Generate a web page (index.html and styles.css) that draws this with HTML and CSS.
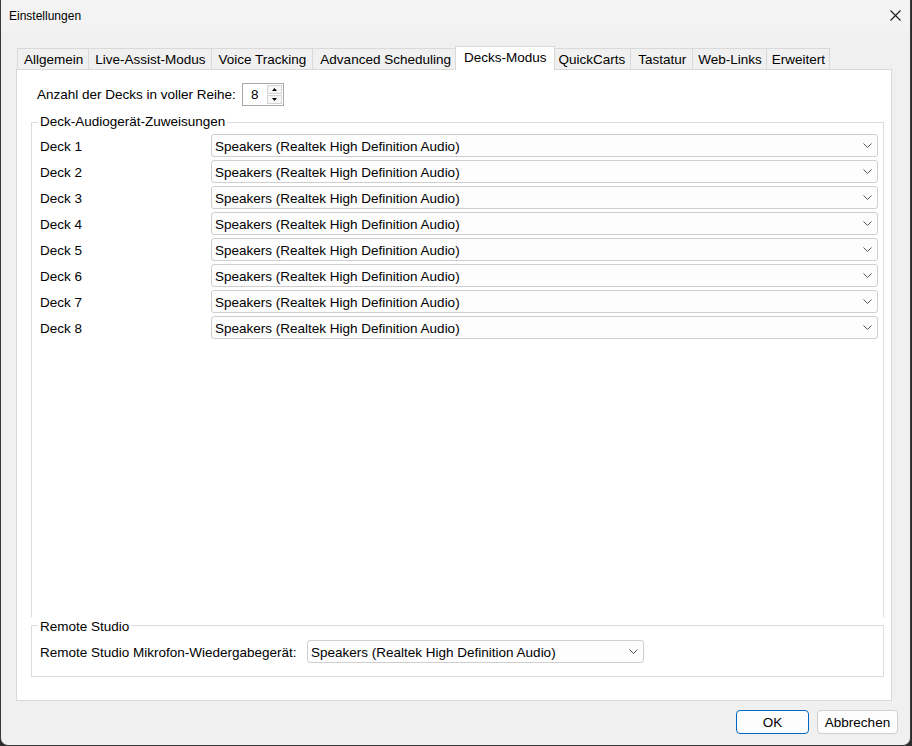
FILE: index.html
```html
<!doctype html>
<html>
<head>
<meta charset="UTF-8">
<title>Einstellungen</title>
	<link rel="stylesheet" href="styles.css">
</head>

<body>
	<div class="window">
		<div class="titlebar">
			<span class="title">Einstellungen</span>
			<svg class="close" width="11" height="11" viewBox="0 0 11 11"><path d="M0.5 0.5 L10.5 10.5 M10.5 0.5 L0.5 10.5" stroke="#1a1a1a" stroke-width="1.1" fill="none"/></svg>
		</div>

		<div class="content">
			<div class="tabs">
				<div class="tab">Allgemein</div>
				<div class="tab">Live-Assist-Modus</div>
				<div class="tab wide">Voice Tracking</div>
				<div class="tab wide">Advanced Scheduling</div>
				<div class="tab active">Decks-Modus</div>
				<div class="tab">QuickCarts</div>
				<div class="tab wide">Tastatur</div>
				<div class="tab narrow">Web-Links</div>
				<div class="tab narrow">Erweitert</div>
			</div>

			<div class="panel">
				<div class="count-row">
					<label class="count-label">Anzahl der Decks in voller Reihe:</label>
					<div class="spin">
						<span class="spin-value">8</span>
						<div class="spin-btns">
							<span class="spin-btn"><svg width="5" height="3" viewBox="0 0 5 3"><path d="M2.5 0 L5 3 L0 3 Z" fill="#000"/></svg></span>
							<span class="spin-btn"><svg width="5" height="3" viewBox="0 0 5 3"><path d="M0 0 L5 0 L2.5 3 Z" fill="#000"/></svg></span>
						</div>
					</div>
				</div>

				<fieldset class="group decks">
					<legend>Deck-Audiogerät-Zuweisungen</legend>
					<div class="deck-row"><span class="deck-label">Deck 1</span><div class="combo"><span>Speakers (Realtek High Definition Audio)</span><svg class="chev" width="9" height="5" viewBox="0 0 9 5"><path d="M0.5 0.5 L4.5 4.5 L8.5 0.5" stroke="#555" fill="none"/></svg></div></div>
					<div class="deck-row"><span class="deck-label">Deck 2</span><div class="combo"><span>Speakers (Realtek High Definition Audio)</span><svg class="chev" width="9" height="5" viewBox="0 0 9 5"><path d="M0.5 0.5 L4.5 4.5 L8.5 0.5" stroke="#555" fill="none"/></svg></div></div>
					<div class="deck-row"><span class="deck-label">Deck 3</span><div class="combo"><span>Speakers (Realtek High Definition Audio)</span><svg class="chev" width="9" height="5" viewBox="0 0 9 5"><path d="M0.5 0.5 L4.5 4.5 L8.5 0.5" stroke="#555" fill="none"/></svg></div></div>
					<div class="deck-row"><span class="deck-label">Deck 4</span><div class="combo"><span>Speakers (Realtek High Definition Audio)</span><svg class="chev" width="9" height="5" viewBox="0 0 9 5"><path d="M0.5 0.5 L4.5 4.5 L8.5 0.5" stroke="#555" fill="none"/></svg></div></div>
					<div class="deck-row"><span class="deck-label">Deck 5</span><div class="combo"><span>Speakers (Realtek High Definition Audio)</span><svg class="chev" width="9" height="5" viewBox="0 0 9 5"><path d="M0.5 0.5 L4.5 4.5 L8.5 0.5" stroke="#555" fill="none"/></svg></div></div>
					<div class="deck-row"><span class="deck-label">Deck 6</span><div class="combo"><span>Speakers (Realtek High Definition Audio)</span><svg class="chev" width="9" height="5" viewBox="0 0 9 5"><path d="M0.5 0.5 L4.5 4.5 L8.5 0.5" stroke="#555" fill="none"/></svg></div></div>
					<div class="deck-row"><span class="deck-label">Deck 7</span><div class="combo"><span>Speakers (Realtek High Definition Audio)</span><svg class="chev" width="9" height="5" viewBox="0 0 9 5"><path d="M0.5 0.5 L4.5 4.5 L8.5 0.5" stroke="#555" fill="none"/></svg></div></div>
					<div class="deck-row"><span class="deck-label">Deck 8</span><div class="combo"><span>Speakers (Realtek High Definition Audio)</span><svg class="chev" width="9" height="5" viewBox="0 0 9 5"><path d="M0.5 0.5 L4.5 4.5 L8.5 0.5" stroke="#555" fill="none"/></svg></div></div>
				</fieldset>

				<fieldset class="group remote">
					<legend>Remote Studio</legend>
					<div class="remote-row">
						<span class="remote-label">Remote Studio Mikrofon-Wiedergabegerät:</span>
						<div class="combo remote-combo"><span>Speakers (Realtek High Definition Audio)</span><svg class="chev" width="9" height="5" viewBox="0 0 9 5"><path d="M0.5 0.5 L4.5 4.5 L8.5 0.5" stroke="#555" fill="none"/></svg></div>
					</div>
				</fieldset>
			</div>

			<div class="buttons">
				<button class="btn default">OK</button>
				<button class="btn">Abbrechen</button>
			</div>
		</div>
	</div>
</body>
</html>
```

FILE: styles.css
```css
body {
	margin: 0;
	background-color: #2b2b2b;
	font-family: "Liberation Sans", Arial, sans-serif;
	font-size: 13.5px;
	color: #000000;
}

.window {
	width: 911px;
	height: 746px;
	box-sizing: border-box;
	background-color: #f0f0f0;
	border: 1px solid #3a3a3a;
	border-top: none;
	border-radius: 0 0 8px 8px;
	overflow: hidden;
}

.titlebar {
	height: 31px;
	display: flex;
	align-items: center;
	justify-content: space-between;
	padding: 0 9px 0 8px;
	background-color: #f3f3f3;
}

.title {
	font-size: 12px;
}

.close {
	display: block;
	margin-top: -1px;
}

.content {
	padding: 15px 0 0 15px;
}

/* tab strip */
.tabs {
	display: flex;
	align-items: flex-end;
	height: 23px;
	margin-left: 2px;
}

.tab {
	height: 21px;
	box-sizing: border-box;
	line-height: 22px;
	padding: 0 5px 0 6px;
	border: 1px solid #d9d9d9;
	border-bottom: none;
	margin-left: -1px;
	background-color: #f0f0f0;
	white-space: nowrap;
}

.tab.wide {
	padding: 0 6px 0 7px;
}

.tab.narrow {
	padding: 0 4px 0 5px;
}

.tab.active {
	position: relative;
	z-index: 1;
	height: 24px;
	line-height: 21px;
	margin: 0 -2px -1px -3px;
	padding: 0 7px 0 8px;
	background-color: #ffffff;
}

.panel {
	width: 876px;
	height: 632px;
	box-sizing: border-box;
	border: 1px solid #d9d9d9;
	background-color: #ffffff;
	padding: 13px 7px 23px 14px;
	display: flex;
	flex-direction: column;
}

/* deck count spinner */
.count-row {
	display: flex;
	align-items: center;
	height: 23px;
	margin-left: 6px;
}

.count-label {
	width: 205px;
}

.spin {
	width: 42px;
	height: 23px;
	box-sizing: border-box;
	border: 1px solid #a8a8a8;
	display: flex;
	justify-content: space-between;
}

.spin-value {
	padding-left: 8px;
	line-height: 22px;
}

.spin-btns {
	width: 15px;
	display: flex;
	flex-direction: column;
	margin: 1px;
	gap: 1px;
}

.spin-btn {
	flex: 1;
	border: 1px solid #d4d4d4;
	background-color: #f7f7f7;
	display: flex;
	align-items: center;
	justify-content: center;
}

.spin-btn svg {
	display: block;
}

/* group boxes */
.group {
	margin: 0;
	border: 1px solid #dcdcdc;
	padding: 4px 5px 0 8px;
	min-width: 0;
}

.group legend {
	padding: 0 2px;
	margin-left: -2px;
	line-height: 16px;
	font-size: 13.5px;
}

.decks {
	flex: 1;
	margin-top: 8px;
	border-bottom: none;
}

.remote {
	margin-top: -2px;
	padding: 5px 5px 13px 8px;
}

.remote legend {
	padding-top: 4px;
}

.deck-row {
	display: flex;
	align-items: center;
	height: 23px;
	margin-bottom: 3px;
}

.deck-label {
	width: 171px;
	flex: none;
	padding-top: 2px;
}

.combo {
	flex: 1;
	height: 23px;
	box-sizing: border-box;
	border: 1px solid #cfcfcf;
	border-radius: 3px;
	background-color: #fdfdfd;
	padding: 0 5px 0 3px;
	display: flex;
	align-items: center;
	justify-content: space-between;
}

.combo span {
	padding-top: 2px;
}

.chev {
	display: block;
}

.remote-row {
	display: flex;
	align-items: center;
	height: 23px;
}

.remote-label {
	width: 267px;
	flex: none;
	padding-top: 2px;
}

.remote-combo {
	flex: none;
	width: 337px;
}

/* dialog buttons */
.buttons {
	display: flex;
	justify-content: flex-end;
	gap: 8px;
	margin-top: 9px;
	padding-right: 12px;
}

.btn {
	height: 24px;
	box-sizing: border-box;
	font-family: "Liberation Sans", Arial, sans-serif;
	font-size: 13.5px;
	color: #000000;
	background-color: #fdfdfd;
	border: 1px solid #d0d0d0;
	border-radius: 4px;
	padding: 0;
	width: 81px;
	cursor: pointer;
}

.btn.default {
	width: 73px;
	border-color: #0067c0;
}
```
